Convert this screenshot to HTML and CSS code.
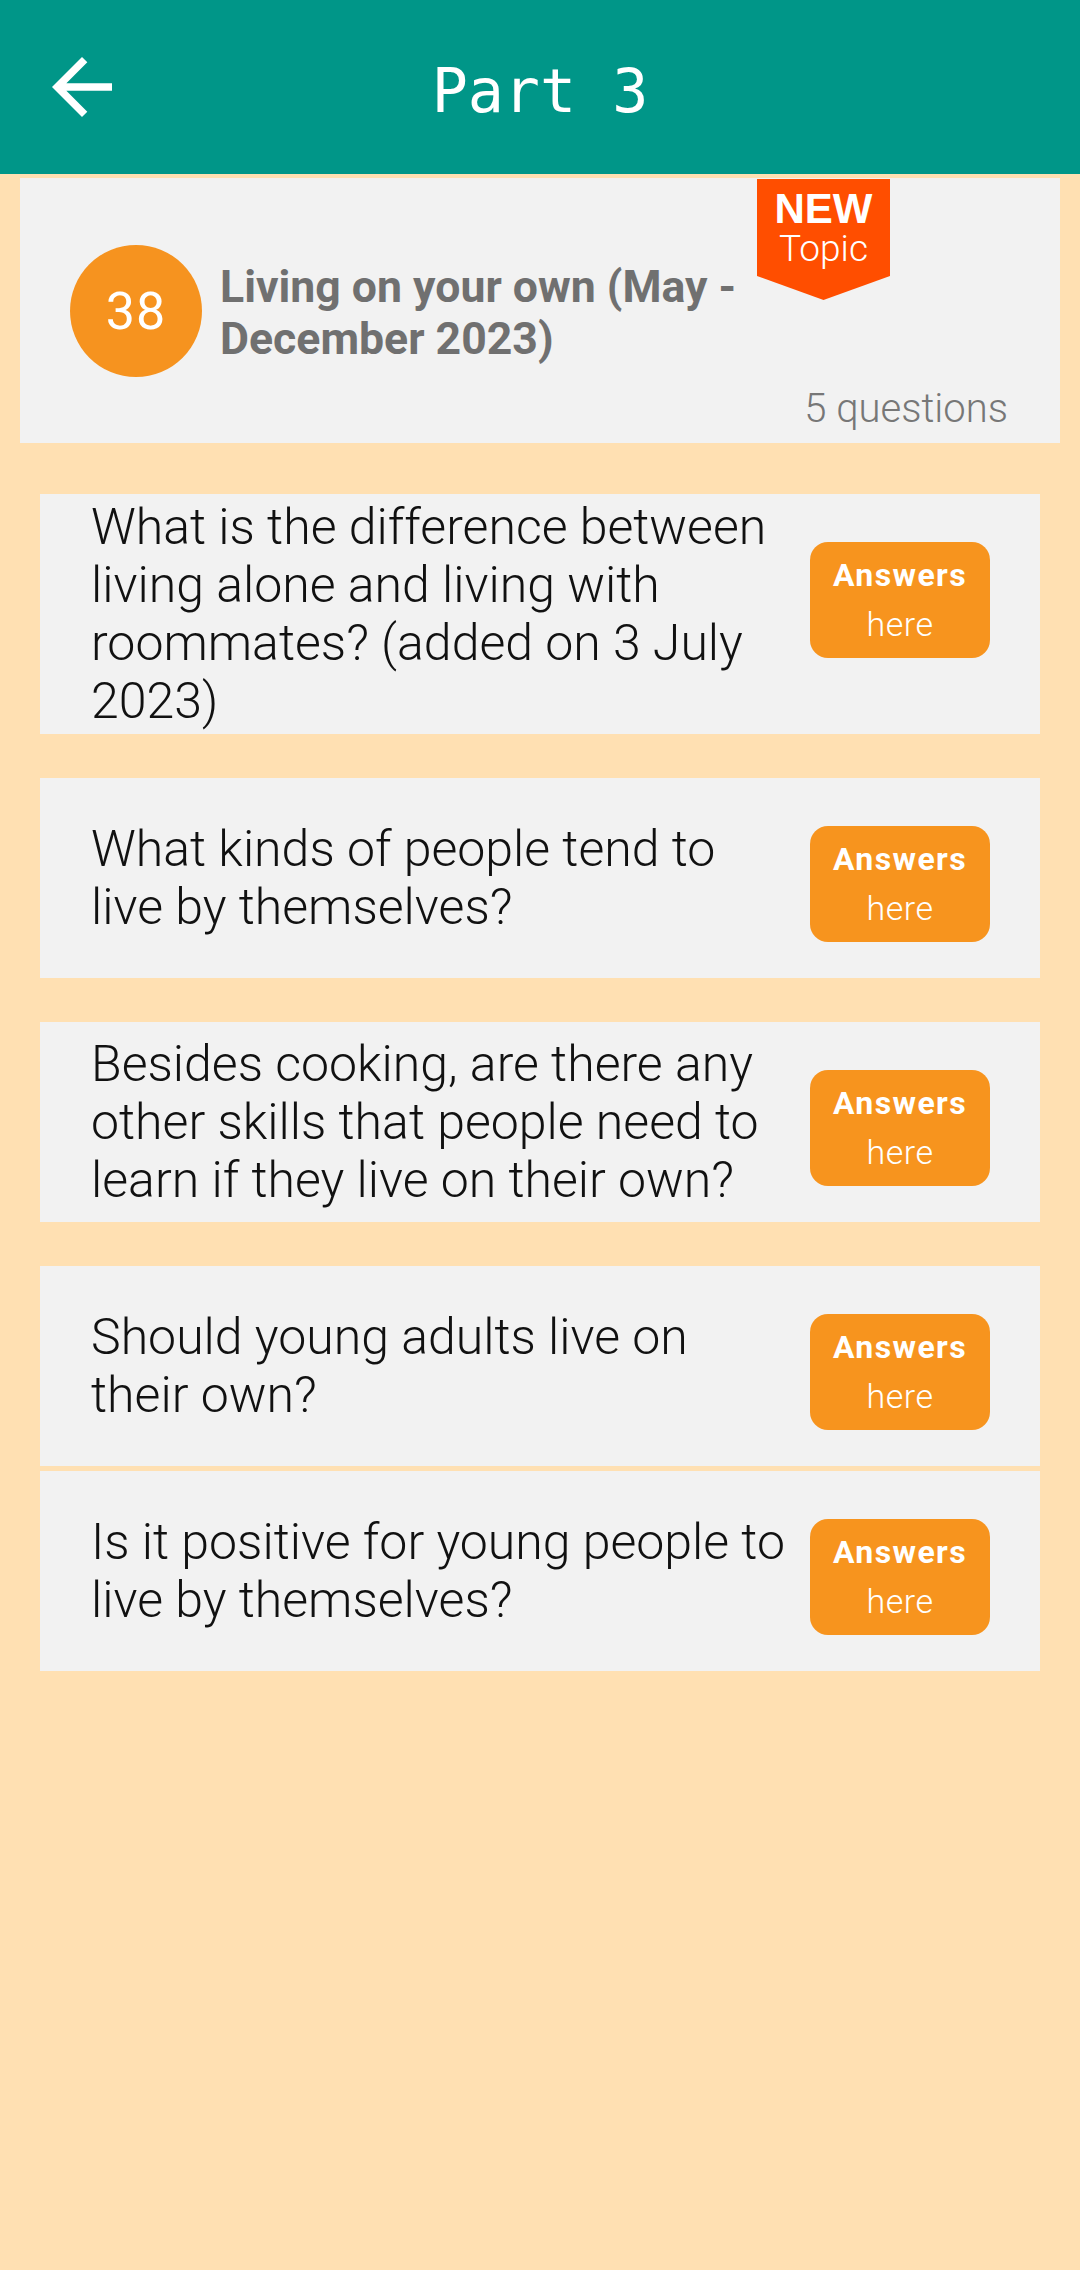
FILE: index.html
```html
<!DOCTYPE html>
<html lang="en">
<head>
<meta charset="utf-8">
<title>Part 3</title>
<link rel="stylesheet" href="styles.css">
</head>
<body>
<header class="appbar">
  <button class="back" aria-label="Back">
    <svg viewBox="0 0 24 24" width="90" height="90"><path fill="#ffffff" d="M20 11H7.83l5.59-5.59L12 4l-8 8 8 8 1.41-1.41L7.83 13H20v-2z"/></svg>
  </button>
  <h1 class="title">Part 3</h1>
  <span class="spacer"></span>
</header>

<main class="content">
  <section class="topic">
    <div class="badge"><span class="badge-new">NEW</span><span class="badge-topic">Topic</span></div>
    <div class="topic-row">
      <div class="num">38</div>
      <h2 class="topic-title">Living on your own (May - December 2023)</h2>
    </div>
    <div class="count">5 questions</div>
  </section>

  <ul class="questions">
    <li class="q">
      <p class="q-text">What is the difference between living alone and living with roommates? (added on 3 July 2023)</p>
      <a class="ans"><b>Answers</b><span>here</span></a>
    </li>
    <li class="q">
      <p class="q-text">What kinds of people tend to live by themselves?</p>
      <a class="ans"><b>Answers</b><span>here</span></a>
    </li>
    <li class="q">
      <p class="q-text">Besides cooking, are there any other skills that people need to learn if they live on their own?</p>
      <a class="ans"><b>Answers</b><span>here</span></a>
    </li>
    <li class="q">
      <p class="q-text">Should young adults live on their own?</p>
      <a class="ans"><b>Answers</b><span>here</span></a>
    </li>
    <li class="q q-tight">
      <p class="q-text">Is it positive for young people to live by themselves?</p>
      <a class="ans"><b>Answers</b><span>here</span></a>
    </li>
  </ul>
</main>
</body>
</html>
```
FILE: styles.css
```css
* { box-sizing: border-box; }
html, body { margin: 0; padding: 0; }
body {
  background: #ffe0b2;
  min-height: 2270px;
  font-family: Roboto, "Noto Sans", "Liberation Sans", sans-serif;
}

.appbar {
  height: 174px;
  background: #009688;
  display: grid;
  grid-template-columns: 1fr auto 1fr;
  align-items: center;
}
.back {
  justify-self: start;
  margin-left: 37px;
  padding: 0;
  border: 0;
  background: none;
  width: 90px;
  height: 90px;
  display: block;
}
.back svg { display: block; }
.title {
  margin: 0;
  font-family: "DejaVu Sans Mono", "Liberation Mono", monospace;
  font-weight: normal;
  font-size: 60px;
  color: #ffffff;
  padding-top: 8px;
}

.content { padding-top: 4px; }

.topic {
  position: relative;
  margin: 0 20px;
  background: #f2f2f2;
  padding: 67px 52px 11px 50px;
}
.badge {
  position: absolute;
  top: 1px;
  left: 737px;
  width: 133px;
  height: 121px;
  background: #ff4e00;
  clip-path: polygon(0 0, 100% 0, 100% 97px, 50% 100%, 0 97px);
  display: flex;
  flex-direction: column;
  align-items: center;
  color: #ffffff;
  padding-top: 9px;
}
.badge-new {
  font-family: "Liberation Sans", Arial, sans-serif;
  font-weight: 700;
  font-size: 42px;
  line-height: 42px;
}
.badge-topic {
  margin-top: 1px;
  font-weight: 300;
  font-size: 37px;
  line-height: 36px;
}
.topic-row {
  display: flex;
  align-items: center;
  gap: 18px;
}
.num {
  width: 132px;
  height: 132px;
  flex: none;
  border-radius: 50%;
  background: #f6931f;
  color: #ffffff;
  font-size: 52px;
  display: flex;
  align-items: center;
  justify-content: center;
  letter-spacing: 1px;
}
.topic-title {
  margin: 4px 0 0;
  width: 540px;
  font-size: 44.6px;
  line-height: 52px;
  font-weight: 700;
  color: #707070;
}
.count {
  margin-top: 8px;
  text-align: right;
  font-size: 40px;
  font-weight: 300;
  color: #777777;
}

.questions {
  list-style: none;
  margin: 51px 40px 0;
  padding: 0;
  display: flex;
  flex-direction: column;
}
.q {
  display: flex;
  align-items: center;
  min-height: 200px;
  padding: 4px 50px 4px 51px;
  background: #f2f2f2;
  margin-top: 44px;
}
.q:first-child { margin-top: 0; }
.q.q-tight { margin-top: 5px; }
.q-text {
  flex: 1;
  margin: 0;
  font-size: 50px;
  line-height: 58px;
  font-weight: 300;
  color: #111111;
}
.ans {
  flex: none;
  align-self: flex-start;
  margin-top: 44px;
  margin-left: 20px;
  width: 180px;
  height: 116px;
  border-radius: 18px;
  background: #f7941e;
  color: #ffffff;
  display: flex;
  flex-direction: column;
  align-items: center;
  padding-top: 9px;
}
.ans b {
  font-weight: 700;
  font-size: 32px;
  line-height: 49px;
  letter-spacing: 1.4px;
}
.ans span {
  font-weight: 300;
  font-size: 34px;
  line-height: 49px;
  letter-spacing: 0.5px;
}
```
